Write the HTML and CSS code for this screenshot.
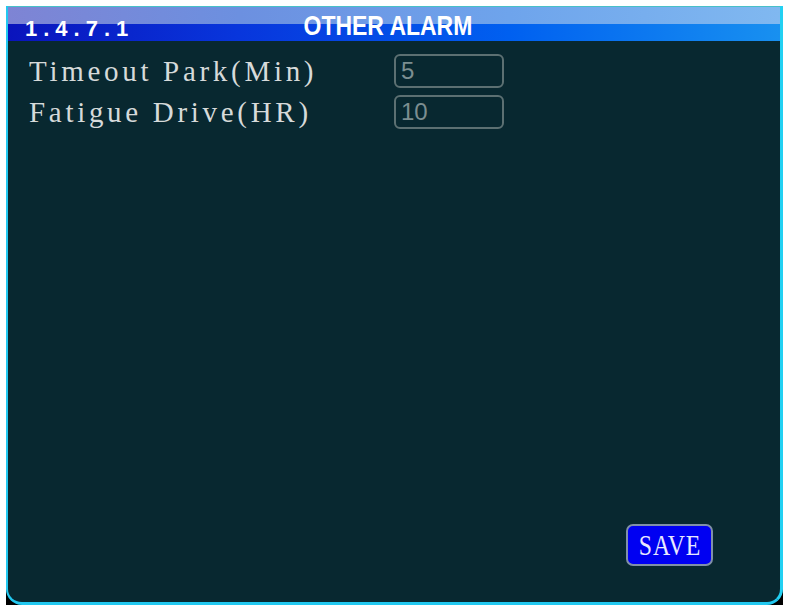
FILE: index.html
```html
<!DOCTYPE html>
<html>
<head>
<meta charset="utf-8">
<link rel="stylesheet" href="styles.css">
</head>
<body>
<div class="screen">
  <div class="panel">
    <div class="header">
      <span class="crumb">1.4.7.1</span>
      <span class="title"><span class="title-text">OTHER ALARM</span></span>
      <span></span>
    </div>
    <div class="content">
      <div class="form">
        <span class="label">Timeout Park(Min)</span>
        <div class="field">5</div>
        <span class="label">Fatigue Drive(HR)</span>
        <div class="field">10</div>
      </div>
      <div class="footer">
        <div class="btn"><span class="btn-text">SAVE</span></div>
      </div>
    </div>
  </div>
</div>
</body>
</html>
```
FILE: styles.css
```css
html, body {
  margin: 0;
  padding: 0;
  background: #ffffff;
}
.screen {
  margin: 6px 0 0 6px;
  width: 777px;
  height: 599px;
  background: #000000;
  display: flex;
}
.panel {
  flex: 1;
  display: flex;
  flex-direction: column;
  background: #082830;
  border-left: 2px solid #22c8f0;
  border-right: 3px solid #22d0f2;
  border-bottom: 3px solid #22c8f0;
  border-radius: 0 0 16px 16px;
  overflow: hidden;
}
.header {
  height: 34px;
  border-top: 1px solid #48c0c8;
  display: grid;
  grid-template-columns: 1fr auto 1fr;
  align-items: end;
  padding: 0 30px 0 17px;
  background:
    linear-gradient(to right, #7e84d4, #6c90e0 30%, #6ea4ec 65%, #80b8f0) top / 100% 50% no-repeat,
    linear-gradient(to right, #0a14bc, #0836dc 30%, #0060f0 65%, #1890f0) bottom / 100% 50% no-repeat;
  font-family: "Liberation Sans", Arial, sans-serif;
  font-weight: bold;
  color: #ffffff;
}
.crumb {
  font-size: 22px;
  letter-spacing: 6px;
  line-height: 22px;
  padding-bottom: 1px;
}
.title {
  font-size: 28px;
  line-height: 28px;
  padding-bottom: 1px;
}
.title-text {
  display: inline-block;
  transform: scaleX(0.82);
  transform-origin: center;
}
.content {
  flex: 1;
  display: flex;
  flex-direction: column;
  justify-content: space-between;
  padding: 13px 0 0 21px;
}
.form {
  display: grid;
  grid-template-columns: 365px 110px;
  row-gap: 7px;
  align-items: center;
}
.label {
  color: #d6dada;
  font-family: "Liberation Serif", "Times New Roman", serif;
  font-size: 29px;
  letter-spacing: 3.7px;
  line-height: 33px;
  white-space: pre;
}
.field {
  height: 30px;
  border: 2px solid #5c7072;
  border-radius: 6px;
  padding-left: 5px;
  color: #7c8e90;
  font-family: "Liberation Sans", Arial, sans-serif;
  font-size: 24px;
  line-height: 30px;
}
.footer {
  display: flex;
  justify-content: flex-end;
  padding: 0 67px 36px 0;
}
.btn {
  width: 83px;
  height: 38px;
  background: #0000f2;
  border: 2px solid #8090a8;
  border-radius: 7px;
  display: flex;
  align-items: center;
  justify-content: center;
  color: #e8e8ff;
  font-family: "Liberation Serif", "Times New Roman", serif;
  font-size: 29px;
  line-height: 38px;
}
.btn-text {
  display: inline-block;
  letter-spacing: 1px;
  transform: scaleX(0.82);
}
```
